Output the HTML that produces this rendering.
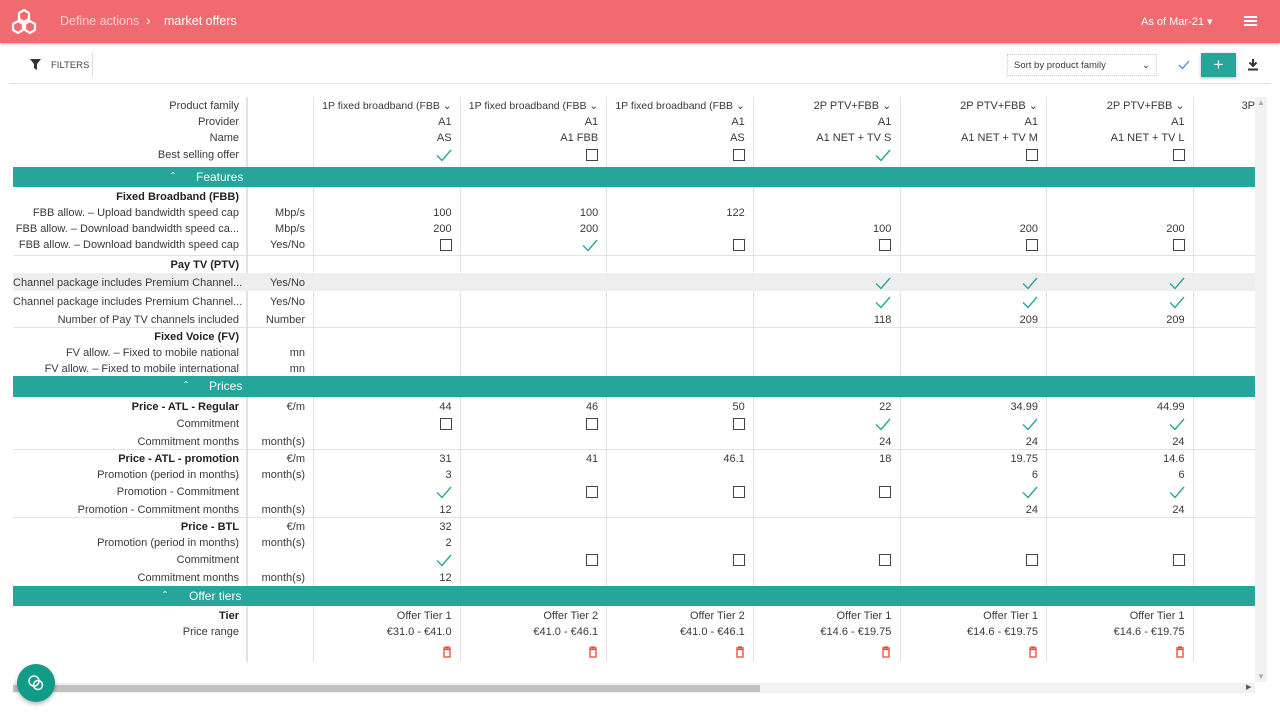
<!DOCTYPE html>
<html><head><meta charset="utf-8"><style>
*{box-sizing:border-box;margin:0;padding:0}
body{width:1280px;height:720px;position:relative;overflow:hidden;background:#fff;font-family:"Liberation Sans",sans-serif;color:#3a3a3a}
.hdr{position:absolute;left:0;top:0;width:1280px;height:43px;background:#ef6b70;box-shadow:0 1px 3px rgba(0,0,0,.3)}
.r{position:absolute;left:13px;width:1242px;height:16px;margin-top:1px;display:grid;grid-template-columns:233px 67px repeat(6,146.6px) 62px;font-size:11px;line-height:16px;white-space:nowrap}
.r>div{text-align:right;padding-right:8px;overflow:hidden}
.r>div:first-child{padding-right:7px}
b{font-weight:bold;color:#222}
.cb{display:inline-block;width:12px;height:12px;border:1.5px solid #444;vertical-align:middle}
.ck{vertical-align:middle}
.vl{position:absolute;top:97px;height:565px;width:1px;background:#e2e2e2}
.hl{position:absolute;left:13px;width:1242px;height:1px;background:#e2e2e2}
.bar{position:absolute;left:13px;width:1242px;height:21px;background:#26a69a;color:#fff;font-size:12px;line-height:21px}
.bar span{position:absolute}
.dd{font-size:10.5px}
</style></head><body>
<div class="hdr">
<svg style="position:absolute;left:9px;top:7px" width="30" height="30" viewBox="0 0 30 28" fill="none" stroke="#fff" stroke-width="2.2"><path d="M15 2l5 3v6l-5 3-5-3V5z"/><path d="M9 13l5 3v6l-5 3-5-3v-6z"/><path d="M21 13l5 3v6l-5 3-5-3v-6z"/></svg>
<div style="position:absolute;left:60px;top:14px;font-size:12.5px;color:#fbd0d2">Define actions</div>
<div style="position:absolute;left:146px;top:12px;font-size:14px;color:#fff">&#8250;</div>
<div style="position:absolute;left:164px;top:14px;font-size:12.5px;color:#fff">market offers</div>
<div style="position:absolute;left:1141px;top:15px;font-size:11px;color:#fff">As of Mar-21 &#9662;</div>
<div style="position:absolute;left:1244px;top:16px;width:13px;height:2px;background:#fff;box-shadow:0 4px 0 #fff,0 8px 0 #fff"></div>
</div>
<svg style="position:absolute;left:30px;top:59px" width="11" height="11" viewBox="0 0 11 11"><path d="M0 0h11L7 5v6L4 9V5z" fill="#333"/></svg>
<div style="position:absolute;left:51px;top:60px;font-size:9.5px;color:#444">FILTERS</div>
<div style="position:absolute;left:92px;top:53px;width:1px;height:24px;background:#ddd"></div>
<div class="hl" style="top:83px;left:10px;width:1260px"></div>
<div style="position:absolute;left:1007px;top:54px;width:150px;height:22px;border:1px dotted #ccc;font-size:9.5px;line-height:21px;padding-left:6px">Sort by product family<span style="position:absolute;right:6px;top:0">&#8964;</span></div>
<svg style="position:absolute;left:1178px;top:60px" width="12" height="10"><path d="M1 5l3.5 3.5L11 1" stroke="#4a90e2" fill="none" stroke-width="1.3"/></svg>
<div style="position:absolute;left:1201px;top:53px;width:35px;height:24px;background:#26a69a;color:#fff;text-align:center;font-size:17px;line-height:23px;box-shadow:0 1px 3px rgba(0,0,0,.3)">+</div>
<svg style="position:absolute;left:1247px;top:58px" width="12" height="13"><path d="M6 1v7M2.5 4.5L6 8l3.5-3.5" stroke="#333" stroke-width="2" fill="none"/><rect x="1" y="10.5" width="10" height="2" fill="#333"/></svg>

<div class="vl" style="left:246px;width:2px"></div><div class="vl" style="left:313px"></div><div class="vl" style="left:460px"></div><div class="vl" style="left:606px"></div><div class="vl" style="left:753px"></div><div class="vl" style="left:900px"></div><div class="vl" style="left:1046px"></div><div class="vl" style="left:1193px"></div>
<div style="position:absolute;left:1255px;top:97px;width:12px;height:585px;background:#f1f1f1"></div>
<div style="position:absolute;left:1257px;top:98px;font-size:8px;color:#aaa">&#9650;</div>
<div style="position:absolute;left:1257px;top:672px;font-size:8px;color:#aaa">&#9660;</div>

<div class="r" style="top:97px"><div>Product family</div><div></div><div class="dd">1P fixed broadband (FBB &#8964;</div><div class="dd">1P fixed broadband (FBB &#8964;</div><div class="dd">1P fixed broadband (FBB &#8964;</div><div>2P PTV+FBB &#8964;</div><div>2P PTV+FBB &#8964;</div><div>2P PTV+FBB &#8964;</div><div style="text-align:left;padding-left:49px;padding-right:0">3P</div></div>
<div class="r" style="top:113px"><div>Provider</div><div></div><div>A1</div><div>A1</div><div>A1</div><div>A1</div><div>A1</div><div>A1</div></div>
<div class="r" style="top:129px"><div>Name</div><div></div><div>AS</div><div>A1 FBB</div><div>AS</div><div>A1 NET + TV S</div><div>A1 NET + TV M</div><div>A1 NET + TV L</div></div>
<div class="r" style="top:146px"><div>Best selling offer</div><div></div><div><svg class="ck" width="16" height="13"><path d="M1 6.5l5 5L15 1" stroke="#26a69a" fill="none" stroke-width="1.4"/></svg></div><div><span class="cb"></span></div><div><span class="cb"></span></div><div><svg class="ck" width="16" height="13"><path d="M1 6.5l5 5L15 1" stroke="#26a69a" fill="none" stroke-width="1.4"/></svg></div><div><span class="cb"></span></div><div><span class="cb"></span></div></div>

<div class="bar" style="top:167px;height:20px"><span style="left:158px">&#710;</span><span style="left:183px">Features</span></div>

<div class="r" style="top:188px"><div><b>Fixed Broadband (FBB)</b></div></div>
<div class="r" style="top:204px"><div>FBB allow. – Upload bandwidth speed cap</div><div>Mbp/s</div><div>100</div><div>100</div><div>122</div></div>
<div class="r" style="top:220px"><div>FBB allow. – Download bandwidth speed ca...</div><div>Mbp/s</div><div>200</div><div>200</div><div></div><div>100</div><div>200</div><div>200</div></div>
<div class="r" style="top:236px"><div>FBB allow. – Download bandwidth speed cap</div><div>Yes/No</div><div><span class="cb"></span></div><div><svg class="ck" width="16" height="13"><path d="M1 6.5l5 5L15 1" stroke="#26a69a" fill="none" stroke-width="1.4"/></svg></div><div><span class="cb"></span></div><div><span class="cb"></span></div><div><span class="cb"></span></div><div><span class="cb"></span></div></div>
<div class="hl" style="top:255px"></div>
<div class="r" style="top:256px"><div><b>Pay TV (PTV)</b></div></div>
<div style="position:absolute;left:13px;top:273px;width:1242px;height:18px;background:#eee"></div>
<div class="r" style="top:274px"><div>Channel package includes Premium Channel...</div><div>Yes/No</div><div></div><div></div><div></div><div><svg class="ck" width="16" height="13"><path d="M1 6.5l5 5L15 1" stroke="#26a69a" fill="none" stroke-width="1.4"/></svg></div><div><svg class="ck" width="16" height="13"><path d="M1 6.5l5 5L15 1" stroke="#26a69a" fill="none" stroke-width="1.4"/></svg></div><div><svg class="ck" width="16" height="13"><path d="M1 6.5l5 5L15 1" stroke="#26a69a" fill="none" stroke-width="1.4"/></svg></div></div>
<div class="r" style="top:293px"><div>Channel package includes Premium Channel...</div><div>Yes/No</div><div></div><div></div><div></div><div><svg class="ck" width="16" height="13"><path d="M1 6.5l5 5L15 1" stroke="#26a69a" fill="none" stroke-width="1.4"/></svg></div><div><svg class="ck" width="16" height="13"><path d="M1 6.5l5 5L15 1" stroke="#26a69a" fill="none" stroke-width="1.4"/></svg></div><div><svg class="ck" width="16" height="13"><path d="M1 6.5l5 5L15 1" stroke="#26a69a" fill="none" stroke-width="1.4"/></svg></div></div>
<div class="r" style="top:311px"><div>Number of Pay TV channels included</div><div>Number</div><div></div><div></div><div></div><div>118</div><div>209</div><div>209</div></div>
<div class="hl" style="top:327px"></div>
<div class="r" style="top:328px"><div><b>Fixed Voice (FV)</b></div></div>
<div class="r" style="top:344px"><div>FV allow. – Fixed to mobile national</div><div>mn</div></div>
<div class="r" style="top:360px"><div>FV allow. – Fixed to mobile international</div><div>mn</div></div>

<div class="bar" style="top:376px"><span style="left:171px">&#710;</span><span style="left:196px">Prices</span></div>

<div class="r" style="top:398px"><div><b>Price - ATL - Regular</b></div><div>€/m</div><div>44</div><div>46</div><div>50</div><div>22</div><div>34.99</div><div>44.99</div></div>
<div class="r" style="top:415px"><div>Commitment</div><div></div><div><span class="cb"></span></div><div><span class="cb"></span></div><div><span class="cb"></span></div><div><svg class="ck" width="16" height="13"><path d="M1 6.5l5 5L15 1" stroke="#26a69a" fill="none" stroke-width="1.4"/></svg></div><div><svg class="ck" width="16" height="13"><path d="M1 6.5l5 5L15 1" stroke="#26a69a" fill="none" stroke-width="1.4"/></svg></div><div><svg class="ck" width="16" height="13"><path d="M1 6.5l5 5L15 1" stroke="#26a69a" fill="none" stroke-width="1.4"/></svg></div></div>
<div class="r" style="top:433px"><div>Commitment months</div><div>month(s)</div><div></div><div></div><div></div><div>24</div><div>24</div><div>24</div></div>
<div class="hl" style="top:449px"></div>
<div class="r" style="top:450px"><div><b>Price - ATL - promotion</b></div><div>€/m</div><div>31</div><div>41</div><div>46.1</div><div>18</div><div>19.75</div><div>14.6</div></div>
<div class="r" style="top:466px"><div>Promotion (period in months)</div><div>month(s)</div><div>3</div><div></div><div></div><div></div><div>6</div><div>6</div></div>
<div class="r" style="top:483px"><div>Promotion - Commitment</div><div></div><div><svg class="ck" width="16" height="13"><path d="M1 6.5l5 5L15 1" stroke="#26a69a" fill="none" stroke-width="1.4"/></svg></div><div><span class="cb"></span></div><div><span class="cb"></span></div><div><span class="cb"></span></div><div><svg class="ck" width="16" height="13"><path d="M1 6.5l5 5L15 1" stroke="#26a69a" fill="none" stroke-width="1.4"/></svg></div><div><svg class="ck" width="16" height="13"><path d="M1 6.5l5 5L15 1" stroke="#26a69a" fill="none" stroke-width="1.4"/></svg></div></div>
<div class="r" style="top:501px"><div>Promotion - Commitment months</div><div>month(s)</div><div>12</div><div></div><div></div><div></div><div>24</div><div>24</div></div>
<div class="hl" style="top:517px"></div>
<div class="r" style="top:518px"><div><b>Price - BTL</b></div><div>€/m</div><div>32</div></div>
<div class="r" style="top:534px"><div>Promotion (period in months)</div><div>month(s)</div><div>2</div></div>
<div class="r" style="top:551px"><div>Commitment</div><div></div><div><svg class="ck" width="16" height="13"><path d="M1 6.5l5 5L15 1" stroke="#26a69a" fill="none" stroke-width="1.4"/></svg></div><div><span class="cb"></span></div><div><span class="cb"></span></div><div><span class="cb"></span></div><div><span class="cb"></span></div><div><span class="cb"></span></div></div>
<div class="r" style="top:569px"><div>Commitment months</div><div>month(s)</div><div>12</div></div>

<div class="bar" style="top:586px;height:20px"><span style="left:150px">&#710;</span><span style="left:176px">Offer tiers</span></div>

<div class="r" style="top:607px"><div><b>Tier</b></div><div></div><div>Offer Tier 1</div><div>Offer Tier 2</div><div>Offer Tier 2</div><div>Offer Tier 1</div><div>Offer Tier 1</div><div>Offer Tier 1</div></div>
<div class="r" style="top:623px"><div>Price range</div><div></div><div>€31.0 - €41.0</div><div>€41.0 - €46.1</div><div>€41.0 - €46.1</div><div>€14.6 - €19.75</div><div>€14.6 - €19.75</div><div>€14.6 - €19.75</div></div>
<div class="r" style="top:643px"><div></div><div></div>
<div><svg width="10" height="12" style="vertical-align:middle"><path d="M1 2h8M3.5 2V1h3v1M2 3.5h6v7.5H2z" stroke="#f44336" fill="none" stroke-width="1.3"/></svg></div>
<div><svg width="10" height="12" style="vertical-align:middle"><path d="M1 2h8M3.5 2V1h3v1M2 3.5h6v7.5H2z" stroke="#f44336" fill="none" stroke-width="1.3"/></svg></div>
<div><svg width="10" height="12" style="vertical-align:middle"><path d="M1 2h8M3.5 2V1h3v1M2 3.5h6v7.5H2z" stroke="#f44336" fill="none" stroke-width="1.3"/></svg></div>
<div><svg width="10" height="12" style="vertical-align:middle"><path d="M1 2h8M3.5 2V1h3v1M2 3.5h6v7.5H2z" stroke="#f44336" fill="none" stroke-width="1.3"/></svg></div>
<div><svg width="10" height="12" style="vertical-align:middle"><path d="M1 2h8M3.5 2V1h3v1M2 3.5h6v7.5H2z" stroke="#f44336" fill="none" stroke-width="1.3"/></svg></div>
<div><svg width="10" height="12" style="vertical-align:middle"><path d="M1 2h8M3.5 2V1h3v1M2 3.5h6v7.5H2z" stroke="#f44336" fill="none" stroke-width="1.3"/></svg></div>
</div>

<div style="position:absolute;left:13px;top:683px;width:1242px;height:10px;background:#f1f1f1"></div>
<div style="position:absolute;left:13px;top:685px;width:747px;height:7px;background:#c1c1c1"></div>
<div style="position:absolute;left:1246px;top:683px;font-size:7px;color:#555">&#9654;</div>
<div style="position:absolute;left:17px;top:664px;width:38px;height:38px;border-radius:50%;background:#139b8a;box-shadow:0 2px 4px rgba(0,0,0,.3)">
<svg style="position:absolute;left:10px;top:10px" width="18" height="18" fill="none" stroke="#fff" stroke-width="1.5"><circle cx="7" cy="7" r="5"/><circle cx="11" cy="11" r="4.5"/></svg>
</div>
</body></html>
